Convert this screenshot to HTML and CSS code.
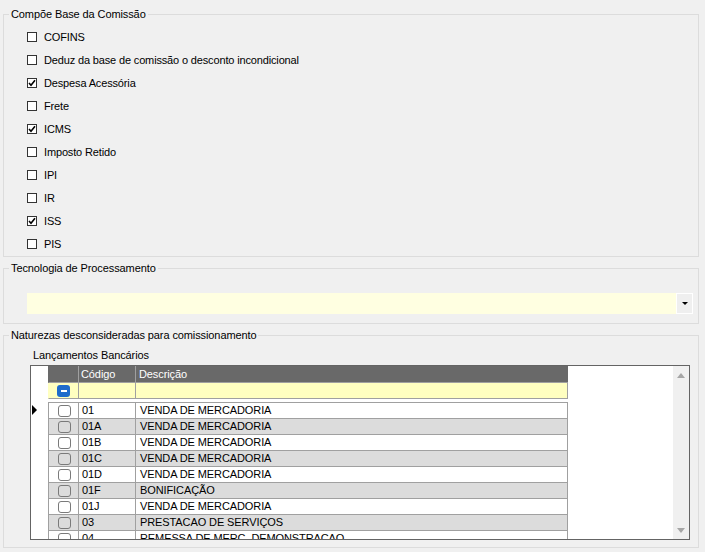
FILE: index.html
```html
<!DOCTYPE html>
<html lang="pt">
<head>
<meta charset="utf-8">
<link rel="stylesheet" href="styles.css">
</head>
<body>
<div class="panel">
  <fieldset class="group">
    <legend>Compõe Base da Comissão</legend>
    <ul class="checks">
      <li class="check"><span class="box"></span>COFINS</li>
      <li class="check"><span class="box"></span>Deduz da base de comissão o desconto incondicional</li>
      <li class="check"><span class="box on"><svg viewBox="0 0 8 8" width="8" height="8"><path d="M1 4 L3 6.3 L7 1.2" fill="none" stroke="#000" stroke-width="1.6"/></svg></span>Despesa Acessória</li>
      <li class="check"><span class="box"></span>Frete</li>
      <li class="check"><span class="box on"><svg viewBox="0 0 8 8" width="8" height="8"><path d="M1 4 L3 6.3 L7 1.2" fill="none" stroke="#000" stroke-width="1.6"/></svg></span>ICMS</li>
      <li class="check"><span class="box"></span>Imposto Retido</li>
      <li class="check"><span class="box"></span>IPI</li>
      <li class="check"><span class="box"></span>IR</li>
      <li class="check"><span class="box on"><svg viewBox="0 0 8 8" width="8" height="8"><path d="M1 4 L3 6.3 L7 1.2" fill="none" stroke="#000" stroke-width="1.6"/></svg></span>ISS</li>
      <li class="check"><span class="box"></span>PIS</li>
    </ul>
  </fieldset>

  <fieldset class="group">
    <legend>Tecnologia de Processamento</legend>
    <div class="combo">
      <div class="combo-field"></div>
      <div class="combo-btn"><span class="caret"></span></div>
    </div>
  </fieldset>

  <fieldset class="group">
    <legend>Naturezas desconsideradas para comissionamento</legend>
    <div class="sublabel">Lançamentos Bancários</div>
    <div class="grid">
      <div class="grid-body">
        <div class="grow hdr">
          <div class="ind"></div>
          <div class="cells"><div class="c1"></div><div class="c2">Código</div><div class="c3">Descrição</div></div>
        </div>
        <div class="grow filter">
          <div class="ind"></div>
          <div class="cells"><div class="c1"><span class="minus"></span></div><div class="c2"></div><div class="c3"></div></div>
        </div>
        <div class="gap"></div>
        <div class="grow data">
          <div class="ind"><span class="arrow"></span></div>
          <div class="cells"><div class="c1"><span class="cb"></span></div><div class="c2">01</div><div class="c3">VENDA DE MERCADORIA</div></div>
        </div>
        <div class="grow data alt">
          <div class="ind"></div>
          <div class="cells"><div class="c1"><span class="cb"></span></div><div class="c2">01A</div><div class="c3">VENDA DE MERCADORIA</div></div>
        </div>
        <div class="grow data">
          <div class="ind"></div>
          <div class="cells"><div class="c1"><span class="cb"></span></div><div class="c2">01B</div><div class="c3">VENDA DE MERCADORIA</div></div>
        </div>
        <div class="grow data alt">
          <div class="ind"></div>
          <div class="cells"><div class="c1"><span class="cb"></span></div><div class="c2">01C</div><div class="c3">VENDA DE MERCADORIA</div></div>
        </div>
        <div class="grow data">
          <div class="ind"></div>
          <div class="cells"><div class="c1"><span class="cb"></span></div><div class="c2">01D</div><div class="c3">VENDA DE MERCADORIA</div></div>
        </div>
        <div class="grow data alt">
          <div class="ind"></div>
          <div class="cells"><div class="c1"><span class="cb"></span></div><div class="c2">01F</div><div class="c3">BONIFICAÇÃO</div></div>
        </div>
        <div class="grow data">
          <div class="ind"></div>
          <div class="cells"><div class="c1"><span class="cb"></span></div><div class="c2">01J</div><div class="c3">VENDA DE MERCADORIA</div></div>
        </div>
        <div class="grow data alt">
          <div class="ind"></div>
          <div class="cells"><div class="c1"><span class="cb"></span></div><div class="c2">03</div><div class="c3">PRESTACAO DE SERVIÇOS</div></div>
        </div>
        <div class="grow data">
          <div class="ind"></div>
          <div class="cells"><div class="c1"><span class="cb"></span></div><div class="c2">04</div><div class="c3">REMESSA DE MERC. DEMONSTRACAO</div></div>
        </div>
      </div>
      <div class="grid-spacer"></div>
      <div class="vscroll">
        <span class="up"></span>
        <span class="down"></span>
      </div>
    </div>
  </fieldset>
</div>
</body>
</html>
```

FILE: styles.css
```css
html, body {
  margin: 0;
  background: #f0f0f0;
}
body {
  font-family: "Liberation Sans", Arial, sans-serif;
  font-size: 11px;
  color: #000;
  letter-spacing: -0.1px;
}
.panel {
  padding: 7px 6px 0 3px;
}
.group {
  margin: 0;
  padding: 0;
  border: 1px solid #dcdcdc;
  min-width: 0;
}
.group + .group {
  margin-top: 4px;
}
.group legend {
  padding: 0 2px;
  margin-left: 5px;
  line-height: 14px;
}

/* checkbox list */
.checks {
  list-style: none;
  margin: 0;
  padding: 4px 0 1px 23px;
  letter-spacing: -0.15px;
}
.check {
  height: 23px;
  display: flex;
  align-items: center;
  gap: 7px;
}
.box {
  width: 10px;
  height: 10px;
  box-sizing: border-box;
  border: 1px solid #333;
  background: #fff;
  display: flex;
  align-items: center;
  justify-content: center;
  flex: none;
}
.box svg {
  display: block;
}

/* combobox */
.combo {
  display: flex;
  height: 21px;
  margin: 18px 5px 9px 23px;
}
.combo-field {
  flex: 1;
  background: #ffffe1;
}
.combo-btn {
  width: 17px;
  box-sizing: border-box;
  border: 1px solid #fff;
  background: #efefef;
  display: flex;
  align-items: center;
  justify-content: center;
}
.caret {
  width: 0;
  height: 0;
  border-left: 3px solid transparent;
  border-right: 3px solid transparent;
  border-top: 3px solid #000;
}

/* grid */
.sublabel {
  margin: 6px 0 0 29px;
  line-height: 14px;
}
.grid {
  margin: 3px 8px 7px 26px;
  height: 175px;
  box-sizing: border-box;
  border: 1px solid #646464;
  background: #fff;
  display: flex;
  overflow: hidden;
}
.grid-body {
  width: 537px;
  flex: none;
  display: flex;
  flex-direction: column;
}
.grid-spacer {
  flex: 1;
}
.vscroll {
  width: 16px;
  flex: none;
  background: #f0f0f0;
  box-sizing: border-box;
  padding: 7px 0 6px;
  display: flex;
  flex-direction: column;
  justify-content: space-between;
  align-items: center;
}
.up, .down {
  width: 0;
  height: 0;
  border-left: 4px solid transparent;
  border-right: 4px solid transparent;
}
.up { border-bottom: 5px solid #a6a6a6; }
.down { border-top: 5px solid #a6a6a6; }

.grow {
  display: flex;
  flex: none;
}
.ind {
  width: 17px;
  flex: none;
  background: #fff;
  display: flex;
  align-items: center;
  padding-left: 1px;
  box-sizing: border-box;
}
.arrow {
  width: 0;
  height: 0;
  border-top: 5px solid transparent;
  border-bottom: 5px solid transparent;
  border-left: 5px solid #000;
}
.cells {
  display: flex;
  width: 520px;
  box-sizing: border-box;
  border-left: 1px solid #a0a0a0;
}
.cells > div {
  box-sizing: border-box;
  border-right: 1px solid #a0a0a0;
  white-space: nowrap;
  overflow: hidden;
}
.c1 {
  width: 30px;
  display: flex;
  align-items: center;
  justify-content: center;
}
.c2 {
  width: 57px;
  padding-left: 3px;
}
.c3 {
  width: 432px;
  padding-left: 4px;
}

.hdr .cells {
  height: 17px;
  background: #696969;
  color: #fff;
  border-left-color: #696969;
  border-bottom: 1px solid #a0a0a0;
  line-height: 16px;
}
.hdr .c2 { padding-left: 2px; }
.hdr .c3 { padding-left: 3px; border-right-color: #696969; }

.filter .cells {
  height: 16px;
  background: #ffffc0;
  border-left-color: #ffffc0;
  border-bottom: 1px solid #a0a0a0;
}
.minus {
  width: 13px;
  height: 12px;
  border-radius: 3px;
  background: #1f6ccb;
  display: flex;
  align-items: center;
  justify-content: center;
}
.minus::before {
  content: "";
  width: 6px;
  height: 2px;
  background: #fff;
}
.gap {
  height: 3px;
  flex: none;
}
.data .cells {
  height: 16px;
  border-top: 1px solid #a0a0a0;
  line-height: 15px;
  background: #fff;
}
.data.alt .cells {
  background: #dcdcdc;
}
.cb {
  width: 13px;
  height: 12px;
  box-sizing: border-box;
  border: 1px solid #7a7a7a;
  border-radius: 3px;
  margin-left: 1px;
}
```
